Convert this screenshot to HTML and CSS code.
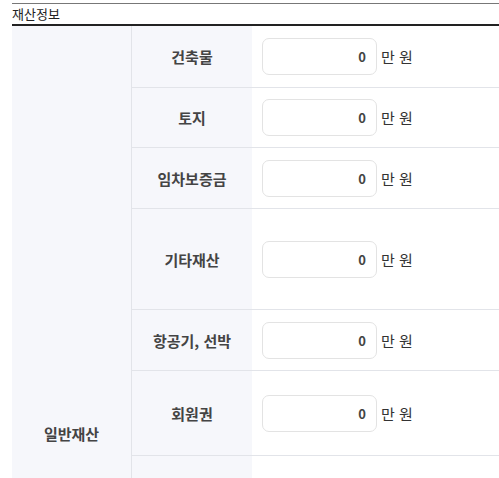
FILE: index.html
```html
<!DOCTYPE html>
<html lang="ko">
<head>
<meta charset="utf-8">
<link rel="stylesheet" href="styles.css">
</head>
<body>
<section class="wrap">
  <h2 class="title">재산정보</h2>
  <div class="grid">
    <div class="group">일반재산</div>

    <div class="label r1">건축물</div>
    <div class="value r1"><span class="box">0</span><span class="unit">만 원</span></div>

    <div class="label r2">토지</div>
    <div class="value r2"><span class="box">0</span><span class="unit">만 원</span></div>

    <div class="label r3">임차보증금</div>
    <div class="value r3"><span class="box">0</span><span class="unit">만 원</span></div>

    <div class="label r4">기타재산</div>
    <div class="value r4"><span class="box">0</span><span class="unit">만 원</span></div>

    <div class="label r5">항공기, 선박</div>
    <div class="value r5"><span class="box">0</span><span class="unit">만 원</span></div>

    <div class="label r6">회원권</div>
    <div class="value r6"><span class="box">0</span><span class="unit">만 원</span></div>

    <div class="label r7"></div>
    <div class="value r7"></div>
  </div>
</section>
</body>
</html>
```

FILE: styles.css
```css
html, body {
  margin: 0;
  padding: 0;
  background: #ffffff;
}

body {
  font-family: "Noto Sans CJK KR", "Noto Sans", sans-serif;
  color: #333333;
  padding: 3px 0 0 12px;
}

.wrap {
  border-top: 1px solid #777777;
}

.title {
  margin: 0;
  height: 20px;
  line-height: 20px;
  font-size: 13px;
  font-weight: 400;
  color: #222222;
  border-bottom: 2px solid #222222;
}

.grid {
  display: grid;
  grid-template-columns: 120px 120px 1fr;
}

.group {
  grid-column: 1;
  grid-row: 1 / span 7;
  background: #f6f7fb;
  border-right: 1px solid #e2e4e9;
  display: flex;
  align-items: center;
  justify-content: center;
  font-size: 15px;
  font-weight: 700;
  color: #444444;
}

.label {
  grid-column: 2;
  background: #f6f7fb;
  border-bottom: 1px solid #e2e4e9;
  display: flex;
  align-items: center;
  justify-content: center;
  font-size: 15px;
  font-weight: 700;
  color: #444444;
}

.value {
  grid-column: 3;
  border-bottom: 1px solid #e2e4e9;
  display: flex;
  align-items: center;
  padding-left: 10px;
  gap: 4px;
}

.r1 { height: 61px; }
.r2 { height: 59px; }
.r3 { height: 60px; }
.r4 { height: 100px; }
.r5 { height: 60px; }
.r6 { height: 84px; }
.r7 { height: 383px; }

.box {
  box-sizing: border-box;
  width: 115px;
  height: 37px;
  border: 1px solid #e3e3e3;
  border-radius: 7px;
  background: #ffffff;
  display: flex;
  align-items: center;
  justify-content: flex-end;
  padding-right: 10px;
  font-size: 13px;
  font-weight: 700;
  color: #444444;
}

.unit {
  font-size: 15px;
  color: #333333;
}
```
